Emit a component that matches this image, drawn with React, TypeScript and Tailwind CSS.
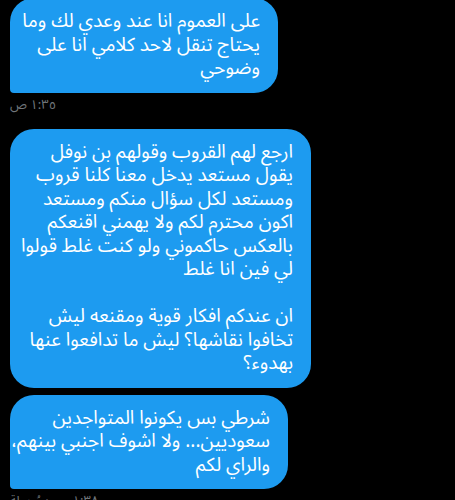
import React from "react";

const font = { fontFamily: '"Noto Sans Arabic", "Noto Sans", "DejaVu Sans", sans-serif' };

function Bubble({ lines, w, className }: { lines: string[]; w: string; className: string }) {
  return (
    <div
      dir="rtl"
      className={`bg-[#1d9bf0] text-white text-[19px] leading-[23.5px] py-3 pr-[18px] pl-3 text-right ${w} ${className}`}
      style={font}
    >
      {lines.map((l, i) => (
        <div key={i} className="whitespace-nowrap h-[23.5px]">
          {l || "\u00a0"}
        </div>
      ))}
    </div>
  );
}

export default function App() {
  return (
    <div className="bg-black w-[455px] h-[500px] overflow-hidden px-[10px]">
      <div className="flex flex-col items-start -mt-[2px]">
        <Bubble
          w="w-[268px]"
          className="rounded-[24px] rounded-bl-[4px]"
          lines={["على العموم انا عند وعدي لك وما", "يحتاج تنقل لاحد كلامي انا على", "وضوحي"]}
        />
        <div dir="rtl" className="mt-[4px] text-[13px] leading-[16px] text-[#71767b]" style={font}>
          ١:٣٥ ص
        </div>
        <Bubble
          w="w-[301px]"
          className="mt-[16px] rounded-[24px]"
          lines={[
            "ارجع لهم القروب وقولهم بن نوفل",
            "يقول مستعد يدخل معنا كلنا قروب",
            "ومستعد لكل سؤال منكم ومستعد",
            "اكون محترم لكم ولا يهمني اقنعكم",
            "بالعكس حاكموني ولو كنت غلط قولوا",
            "لي فين انا غلط",
            "",
            "ان عندكم افكار قوية ومقنعه ليش",
            "تخافوا نقاشها؟ ليش ما تدافعوا عنها",
            "بهدوء؟",
          ]}
        />
        <Bubble
          w="w-[278px]"
          className="mt-[7px] rounded-[24px] rounded-bl-[4px]"
          lines={["شرطي بس يكونوا المتواجدين", "سعوديين... ولا اشوف اجنبي بينهم،", "والراي لكم"]}
        />
        <div dir="rtl" className="mt-[4px] text-[13px] leading-[16px] text-[#71767b]" style={font}>
          ١:٣٨ ص · مُرسلة
        </div>
      </div>
    </div>
  );
}
